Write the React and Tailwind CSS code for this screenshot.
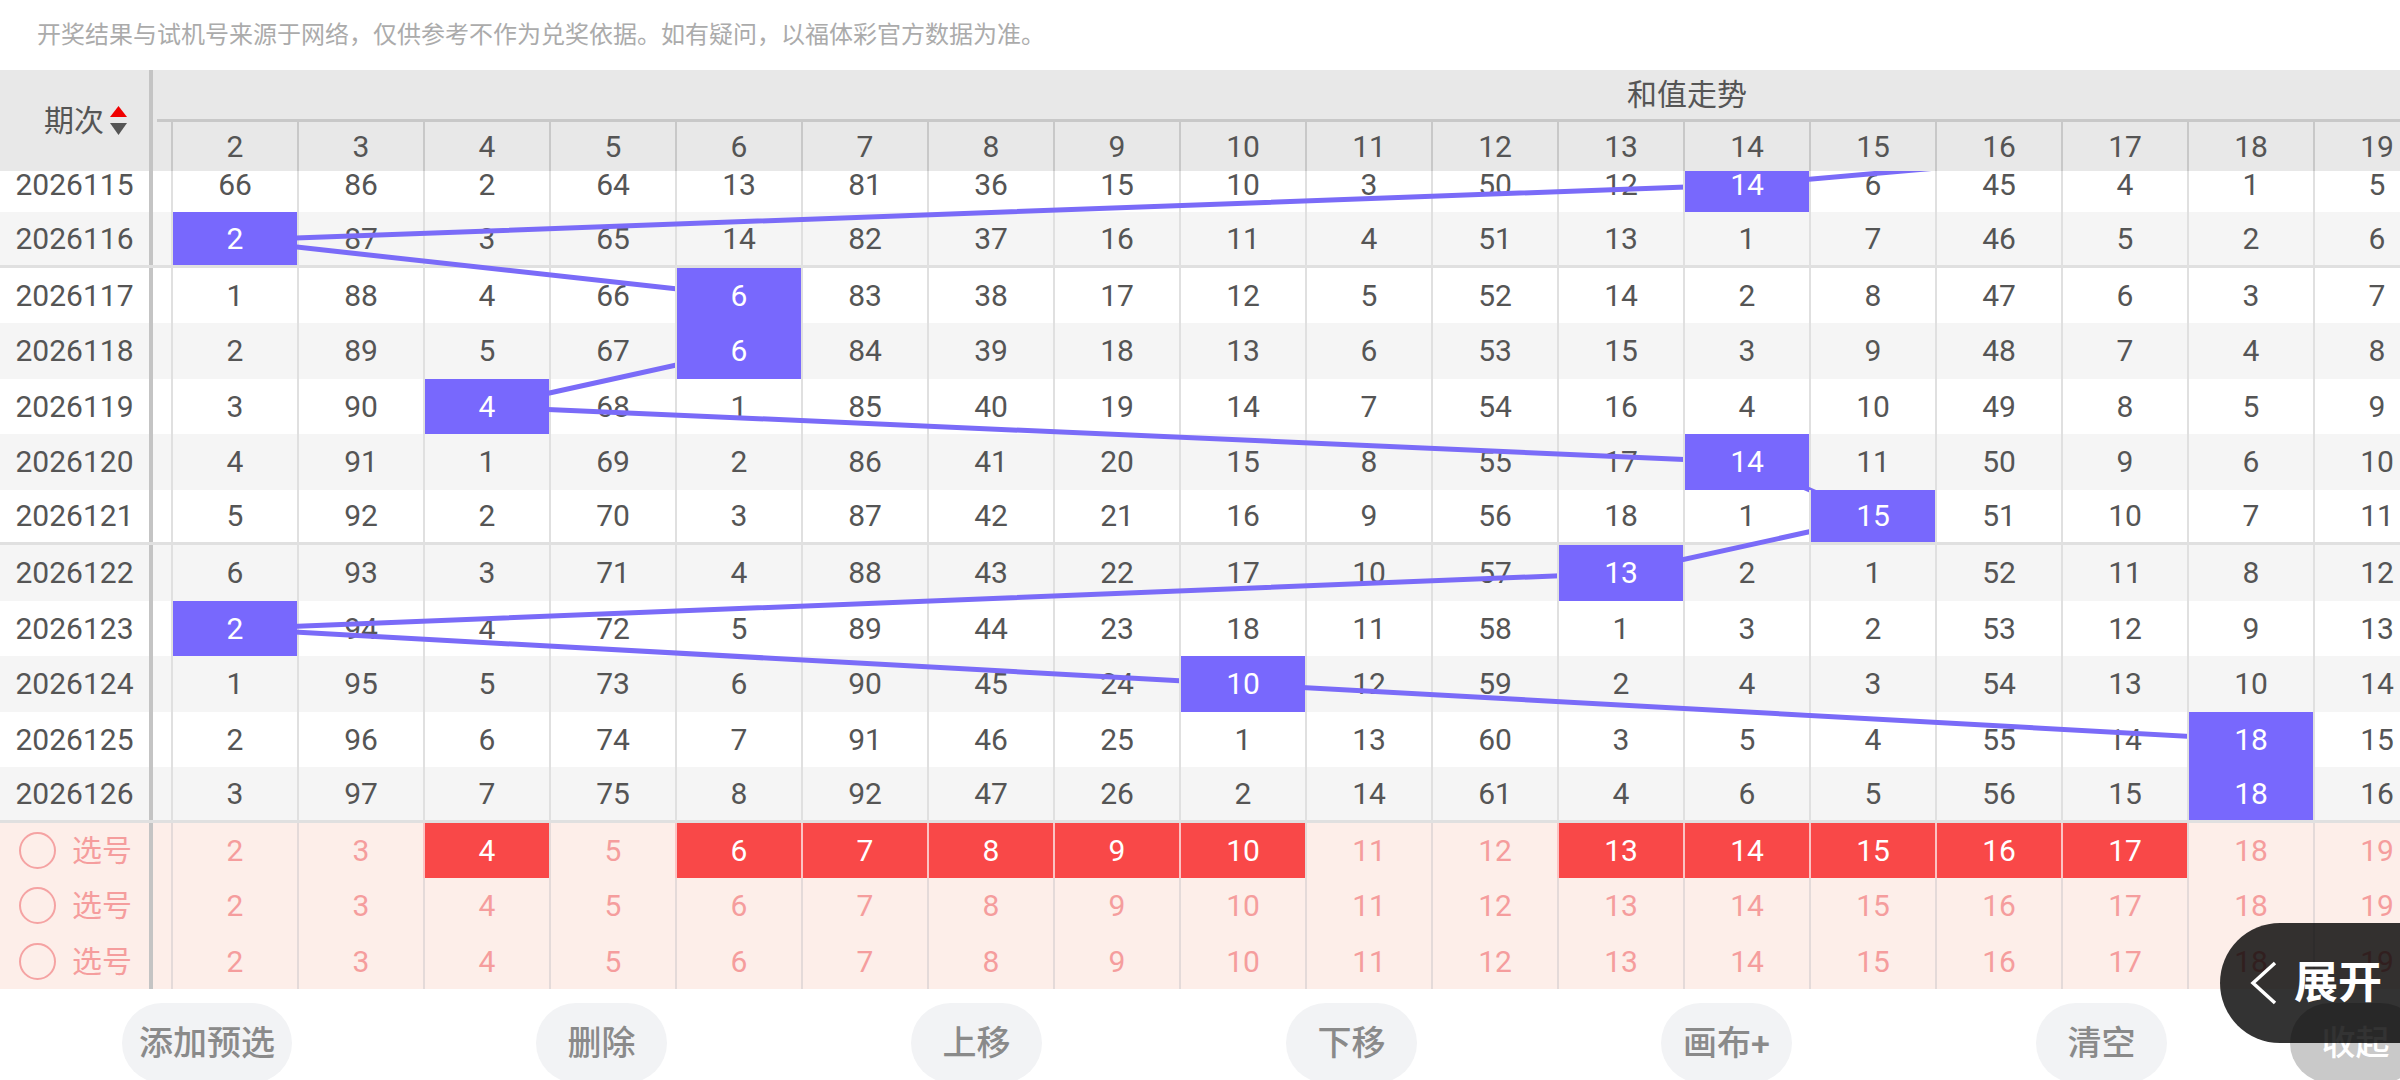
import React from "react";

const cols = Array.from({ length: 18 }, (_, i) => i + 2);
const hits = [14, 2, 6, 6, 4, 14, 15, 13, 2, 10, 18, 18];
const start = {
  2: 66, 3: 86, 4: 2, 5: 64, 6: 13, 7: 81, 8: 36, 9: 15, 10: 10,
  11: 3, 12: 50, 13: 12, 14: 0, 15: 6, 16: 45, 17: 4, 18: 1, 19: 5,
};
const picked = [4, 6, 7, 8, 9, 10, 13, 14, 15, 16, 17];

const ROW_H = 55.5;

function buildRows() {
  const cnt = { ...start };
  return hits.map((h, i) => {
    const cells = cols.map((c) => {
      if (i > 0) cnt[c] = c === h ? 0 : cnt[c] + 1;
      else if (c === h) cnt[c] = 0;
      return { col: c, hit: c === h, value: c === h ? c : cnt[c] };
    });
    return { issue: 2026115 + i, cells };
  });
}

const rows = buildRows();

function colX(c) {
  return 235 + 126 * (c - 2);
}

function TrendLine() {
  const pts = [[colX(19), -ROW_H / 2]].concat(
    hits.map((h, i) => [colX(h), ROW_H / 2 + ROW_H * i])
  );
  return (
    <svg
      className="absolute left-0 top-0 z-10 pointer-events-none"
      width="2440"
      height={ROW_H * hits.length}
    >
      <polyline
        points={pts.map((p) => p.join(",")).join(" ")}
        fill="none"
        stroke="#7a6bf8"
        strokeWidth="5"
      />
    </svg>
  );
}

function SortArrows() {
  return (
    <svg width="17" height="30" viewBox="0 0 17 30" className="ml-[6px]">
      <polygon points="8.5,0 17,11 0,11" fill="#f00000" />
      <polygon points="0,17 17,17 8.5,29" fill="#555" />
    </svg>
  );
}

function Header() {
  return (
    <div className="flex h-[101px] bg-[#e8e8e8]">
      <div className="w-[149px] shrink-0 flex items-center justify-center pl-[22px] text-[30px] text-[#555]">
        期次
        <SortArrows />
      </div>
      <div className="w-[4px] shrink-0 bg-[#c4c4c4]" />
      <div className="flex flex-col flex-1 min-w-0">
        <div className="h-[49px] flex items-center pl-[1474px] text-[30px] text-[#555] whitespace-nowrap">
          和值走势
        </div>
        <div className="h-[3px] ml-[4px] bg-[#c8c8c8]" />
        <div className="h-[49px] flex pl-[18px]">
          {cols.map((c) => (
            <div
              key={c}
              className="w-[126px] shrink-0 border-l-2 border-[#c8c8c8] flex items-center justify-center text-[30px] text-[#555]"
            >
              {c}
            </div>
          ))}
        </div>
      </div>
    </div>
  );
}

function DataRow({ row, index }) {
  const bg = index % 2 === 0 ? "bg-white" : "bg-[#f5f5f5]";
  const sep = index % 5 === 1 ? "border-b-[3px] border-[#e0e0e0]" : "";
  return (
    <div className={`flex h-[55.5px] ${bg} ${sep}`}>
      <div className="w-[149px] shrink-0 flex items-center justify-center text-[30px] text-[#555]">
        {row.issue}
      </div>
      <div className="w-[4px] shrink-0 bg-[#c4c4c4]" />
      <div className="w-[18px] shrink-0" />
      {row.cells.map((cell) =>
        cell.hit ? (
          <div
            key={cell.col}
            className="relative z-20 w-[126px] shrink-0 border-l-2 border-[#e0e0e0] bg-[#7868fd] flex items-center justify-center text-[30px] text-white"
          >
            {cell.value}
          </div>
        ) : (
          <div
            key={cell.col}
            className="w-[126px] shrink-0 border-l-2 border-[#e0e0e0] flex items-center justify-center text-[30px] text-[#555]"
          >
            {cell.value}
          </div>
        )
      )}
    </div>
  );
}

function PickRow({ selected }) {
  return (
    <div className="flex h-[55.5px] bg-[#fdeee9]">
      <div className="w-[149px] shrink-0 flex items-center pl-[19px] gap-[16px] text-[30px] text-[#f59d9d]">
        <span className="w-[37px] h-[37px] rounded-full border-2 border-[#f5a3a3]" />
        选号
      </div>
      <div className="w-[4px] shrink-0 bg-[#c4c4c4]" />
      <div className="w-[18px] shrink-0" />
      {cols.map((c) =>
        selected.includes(c) ? (
          <div
            key={c}
            className="w-[126px] shrink-0 border-l-2 border-[#fbc3c3] bg-[#f94848] flex items-center justify-center text-[30px] text-white"
          >
            {c}
          </div>
        ) : (
          <div
            key={c}
            className="w-[126px] shrink-0 border-l-2 border-[#e4dad9] flex items-center justify-center text-[30px] text-[#f59d9d]"
          >
            {c}
          </div>
        )
      )}
    </div>
  );
}

const buttons = ["添加预选", "删除", "上移", "下移", "画布+", "清空"];

export default function App() {
  return (
    <div className="relative w-[2400px] h-[1080px] overflow-hidden bg-white font-[Roboto,'Noto_Sans_CJK_SC',sans-serif]">
      <div className="h-[70px] flex items-center pl-[37px] text-[24px] text-[#ababab] whitespace-nowrap">
        开奖结果与试机号来源于网络，仅供参考不作为兑奖依据。如有疑问，以福体彩官方数据为准。
      </div>

      <div className="flex flex-col">
        <Header />
        <div className="h-[651.5px] overflow-hidden">
          <div className="relative -mt-[14.5px]">
            {rows.map((row, i) => (
              <DataRow key={row.issue} row={row} index={i} />
            ))}
            <TrendLine />
          </div>
        </div>
        <PickRow selected={picked} />
        <PickRow selected={[]} />
        <PickRow selected={[]} />
      </div>

      <div className="flex items-start pl-[122px] pt-[14px] gap-[244px]">
        {buttons.map((b) => (
          <button
            key={b}
            className="h-[80px] min-w-[131px] px-[17px] shrink-0 rounded-[40px] bg-[#f2f3f5] text-[34px] font-medium text-[#8a8a8a] whitespace-nowrap"
          >
            {b}
          </button>
        ))}
        <button className="-ml-[121px] h-[80px] min-w-[131px] px-[20px] shrink-0 rounded-[40px] bg-[#c9c9c9] text-[34px] font-medium text-white whitespace-nowrap">
          收起
        </button>
      </div>

      <div className="absolute left-[2220px] top-[923px] h-[120px] w-[220px] rounded-l-[60px] bg-black/80 flex items-center pl-[30px] gap-[16px] text-white">
        <svg width="28" height="44" viewBox="0 0 28 44">
          <polyline
            points="25,2 3,22 25,42"
            fill="none"
            stroke="#fff"
            strokeWidth="3.5"
          />
        </svg>
        <span className="text-[44px] font-bold leading-none">展开</span>
      </div>
    </div>
  );
}
